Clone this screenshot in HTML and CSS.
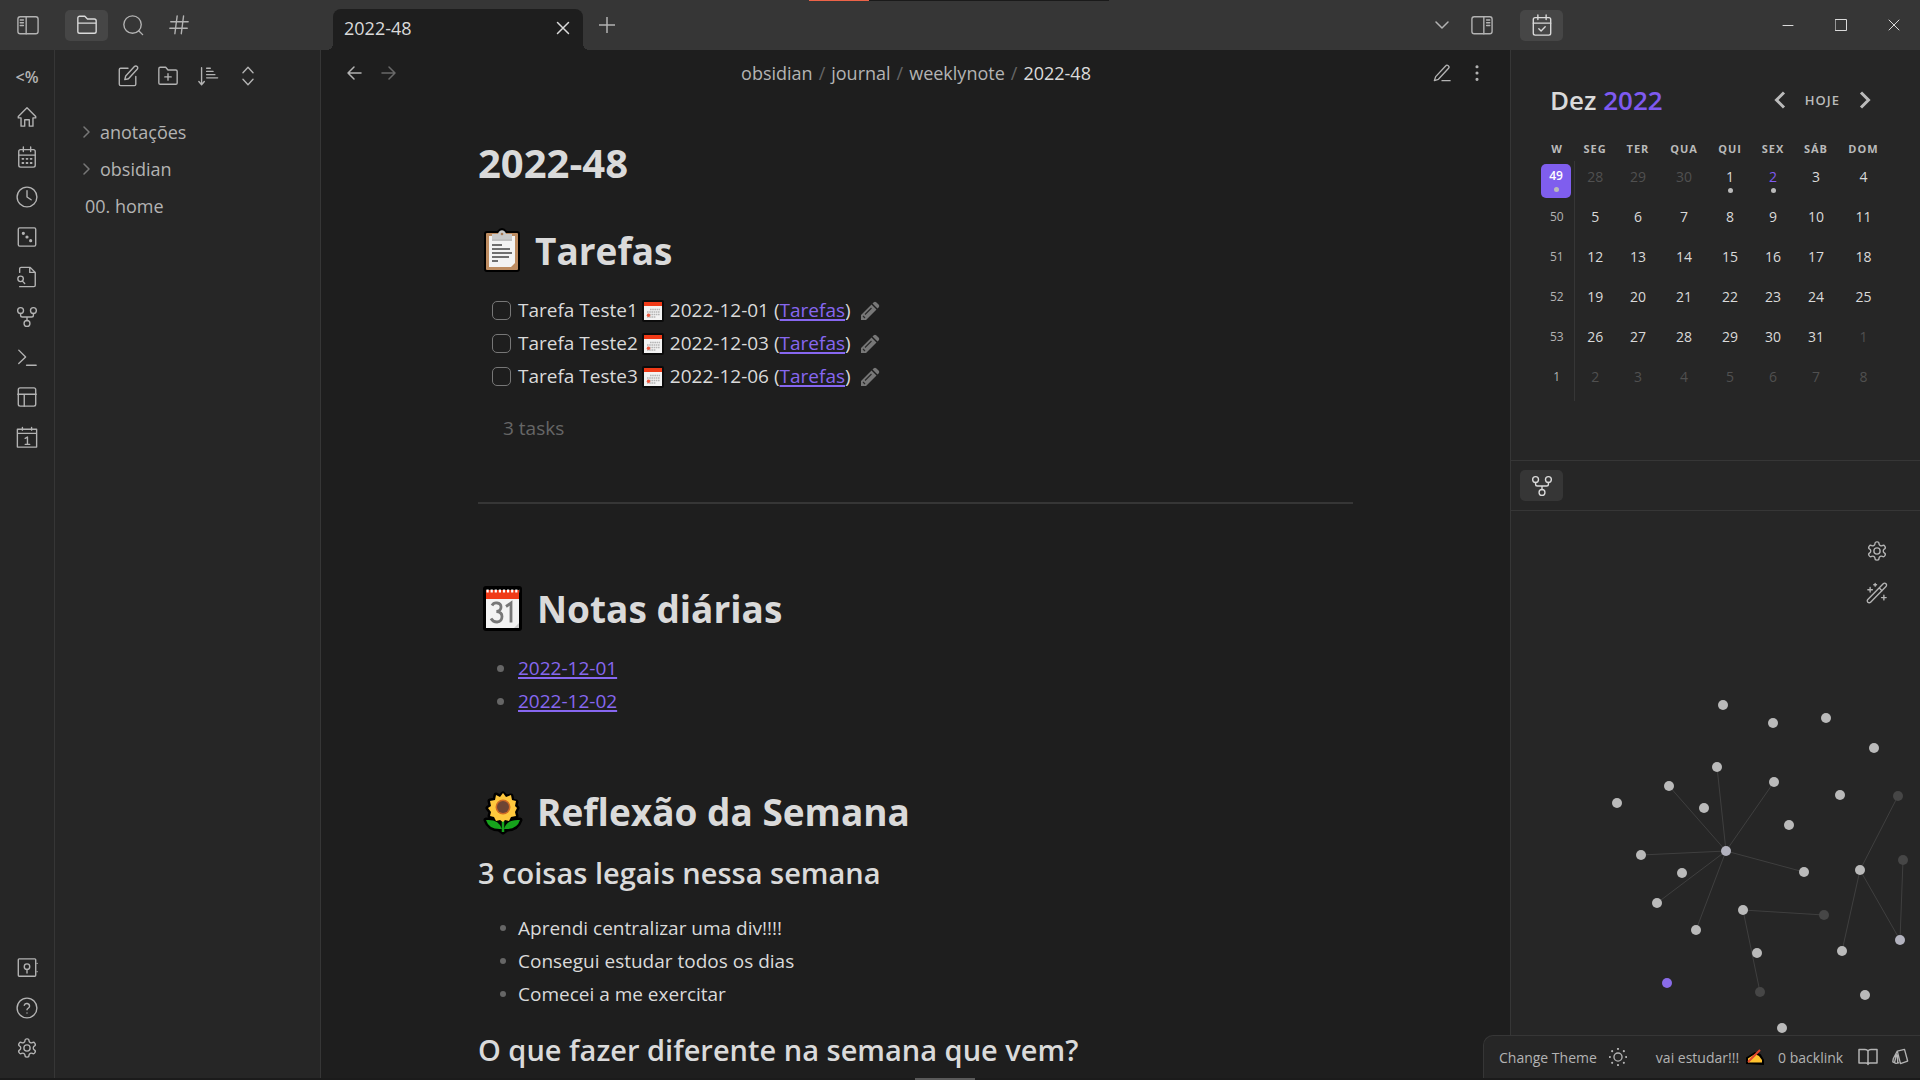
FILE: index.html
```html
<!DOCTYPE html>
<html lang="pt-BR">
<head>
<meta charset="utf-8">
<title>2022-48 - obsidian</title>
<link rel="stylesheet" href="styles.css">
</head>
<body>
<svg class="sprite" aria-hidden="true">
  <symbol id="i-fork" viewBox="0 0 24 24"><circle cx="12" cy="19" r="3.2"/><circle cx="5" cy="5" r="3.2"/><circle cx="19" cy="5" r="3.2"/><path d="M19 8v2c0 1-1 2-2 2H7c-1 0-2-1-2-2V8M12 12v4"/></symbol>
  <symbol id="i-gear" viewBox="0 0 24 24"><path d="M12.22 2h-.44a2 2 0 0 0-2 2v.18a2 2 0 0 1-1 1.73l-.43.25a2 2 0 0 1-2 0l-.15-.08a2 2 0 0 0-2.73.73l-.22.38a2 2 0 0 0 .73 2.73l.15.1a2 2 0 0 1 1 1.72v.51a2 2 0 0 1-1 1.74l-.15.09a2 2 0 0 0-.73 2.73l.22.38a2 2 0 0 0 2.73.73l.15-.08a2 2 0 0 1 2 0l.43.25a2 2 0 0 1 1 1.73V20a2 2 0 0 0 2 2h.44a2 2 0 0 0 2-2v-.18a2 2 0 0 1 1-1.73l.43-.25a2 2 0 0 1 2 0l.15.08a2 2 0 0 0 2.73-.73l.22-.39a2 2 0 0 0-.73-2.73l-.15-.08a2 2 0 0 1-1-1.74v-.5a2 2 0 0 1 1-1.74l.15-.09a2 2 0 0 0 .73-2.73l-.22-.38a2 2 0 0 0-2.73-.73l-.15.08a2 2 0 0 1-2 0l-.43-.25a2 2 0 0 1-1-1.73V4a2 2 0 0 0-2-2z"/><circle cx="12" cy="12" r="3.4"/></symbol>
  <symbol id="i-due" viewBox="0 0 22 22"><rect width="22" height="22" rx="2" fill="#0b0b0b" stroke="none"/><path d="M2 2h18v18H2z" fill="#f2f2f2" stroke="none"/><path d="M2 2h18v4H2z" fill="#f03a17" stroke="none"/><path d="M8 9.500h10M5 12h13M5 14.500h13M5 17h9" stroke="#b5b5b5" stroke-width="1.600" stroke-dasharray="1.600 .6" stroke-linecap="butt"/><circle cx="6.500" cy="15.300" r="1.700" fill="#f0553a" stroke="none"/></symbol>
  <symbol id="i-pencil" viewBox="0 0 20 20"><path d="M1 19v-5L11.500 3.500l5 5L6 19zM12.500 2.500l1.300-1.300q1.200-1 2.400 0L18.800 3.800q1 1.200 0 2.400L17.500 7.500z" fill="#777" stroke="none"/><path d="M5 13.500l6.500-6.500M3 15l2 2" stroke="#2a2a2a" stroke-width="1.200"/></symbol>
</svg>
<div class="app">
  <header class="titlebar">
    <div class="title-left">
      <button class="icon-btn toggle" aria-label="Recolher"><svg class="icon wide" viewBox="0 0 24 24"><rect x="1" y="3" width="22" height="18.500" rx="2.500"/><path d="M10 3v18.500M3.500 6.500h3.500M3.500 9.500h3.500M3.500 12.500h3.500"/></svg></button>
      <button class="icon-btn active" aria-label="Arquivos"><svg class="icon folder" viewBox="0 0 24 24"><path d="M20 21a2 2 0 0 0 2-2V7.500a2 2 0 0 0-2-2h-7.500L9.600 2.500H4a2 2 0 0 0-2 2V19a2 2 0 0 0 2 2zM2 10h20"/></svg></button>
      <button class="icon-btn" aria-label="Pesquisar"><svg class="icon" viewBox="0 0 24 24"><circle cx="11.500" cy="11.500" r="9.500"/><path d="m22.500 22.500-4.300-4.300"/></svg></button>
      <button class="icon-btn" aria-label="Tags"><svg class="icon" viewBox="0 0 24 24"><path d="M3 8.500h19M2 15.500h19M10 2 7.500 21.500M17 2 14.500 21.500"/></svg></button>
    </div>
    <div class="title-main">
      <div class="tab"><span>2022-48</span><button class="bare" aria-label="Fechar aba"><svg class="icon tiny" viewBox="0 0 14 14"><path d="m1.500 1.500 11 11M12.500 1.500l-11 11"/></svg></button></div>
      <button class="bare newtab" aria-label="Nova aba"><svg class="icon small" viewBox="0 0 16 16"><path d="M8 0v16M0 8h16"/></svg></button>
      <div class="title-tools">
        <button class="bare" aria-label="Lista de abas"><svg class="icon small" viewBox="0 0 16 16"><path d="m2 5 6 6 6-6"/></svg></button>
        <button class="bare" aria-label="Barra direita"><svg class="icon wide" viewBox="0 0 24 24"><rect x="1" y="3" width="22" height="18.500" rx="2.500"/><path d="M14 3v18.500M17 6.500h3.500M17 9.500h3.500M17 12.500h3.500"/></svg></button>
      </div>
    </div>
    <div class="title-right">
      <button class="icon-btn active" aria-label="Calendário"><svg class="icon" viewBox="0 0 24 24"><rect x="2.500" y="4" width="19" height="19" rx="2"/><path d="M7.500 1v5M16.500 1v5M2.500 10h19M8.500 16l2.500 2.500 4.500-4.500"/></svg></button>
      <div class="win">
        <button class="bare" aria-label="Minimizar"><svg class="icon mini" viewBox="0 0 12 12"><path d="M1 6.500h10"/></svg></button>
        <button class="bare" aria-label="Maximizar"><svg class="icon mini" viewBox="0 0 12 12"><path d="M.5.5h11v11H.5z"/></svg></button>
        <button class="bare" aria-label="Fechar"><svg class="icon mini" viewBox="0 0 12 12"><path d="m1 1 10 10M11 1 1 11"/></svg></button>
      </div>
    </div>
    <div class="load"><span class="load-done"></span></div>
  </header>

  <div class="body">
    <nav class="ribbon">
      <button class="rib" aria-label="Templater"><span class="rib-text">&lt;%</span></button>
      <button class="rib" aria-label="Início"><svg class="icon" viewBox="0 0 24 24"><path d="M12 2 2.500 11.500V13H5.500v9h4v-7h5v7h4v-9h3v-1.500z"/></svg></button>
      <button class="rib" aria-label="Calendário"><svg class="icon" viewBox="0 0 24 24"><rect x="3" y="4" width="18" height="19" rx="2"/><path d="M8 1v5M16 1v5M3 10h18"/><path d="M7 14h1M11.500 14h1M16 14h1M7 18.500h1M11.500 18.500h1M16 18.500h1" stroke-width="2"/></svg></button>
      <button class="rib" aria-label="Recentes"><svg class="icon" viewBox="0 0 24 24"><circle cx="12" cy="12" r="10.800"/><path d="M12 5v7l4.500 3"/></svg></button>
      <button class="rib" aria-label="Nota aleatória"><svg class="icon" viewBox="0 0 24 24"><rect x="2.500" y="2" width="19" height="20" rx="1.500"/><g fill="currentColor"><circle cx="8" cy="8" r="1"/><circle cx="12" cy="12" r="1"/><circle cx="16" cy="16" r="1"/></g></svg></button>
      <button class="rib" aria-label="Trocador rápido"><svg class="icon" viewBox="0 0 24 24"><path d="M4 7V3a1.500 1.500 0 0 1 1.500-1.500h10L21 7v14a1.500 1.500 0 0 1-1.500 1.500H4M15 1.500V7h6"/><circle cx="5" cy="14" r="3"/><path d="m7 16.500 2.500 2.500"/></svg></button>
      <button class="rib" aria-label="Grafo"><svg class="icon"><use href="#i-fork"/></svg></button>
      <button class="rib" aria-label="Comandos"><svg class="icon" viewBox="0 0 24 24"><path d="m3 4.500 7.500 7.500L3 19M11.500 21H22"/></svg></button>
      <button class="rib" aria-label="Layouts"><svg class="icon" viewBox="0 0 24 24"><rect x="2.500" y="2" width="19" height="20" rx="2"/><path d="M2 9h20M9 9v13"/></svg></button>
      <button class="rib" aria-label="Nota diária"><svg class="icon" viewBox="0 0 24 24"><path d="M1.500 3.500h21V23h-21zM1.500 8h21M7 1.500v3M17 1.500v3"/><path d="M10 13.500l2.500-1.500v8M10 20h5" stroke-width="1.500"/></svg></button>
      <div class="grow"></div>
      <button class="rib" aria-label="Cofre"><svg class="icon" viewBox="0 0 24 24"><rect x="2.500" y="2" width="19" height="19" rx="1"/><circle cx="12" cy="10.500" r="3"/><path d="M12 13.500v4M23 7v0M23 16v0"/></svg></button>
      <button class="rib" aria-label="Ajuda"><svg class="icon" viewBox="0 0 24 24"><circle cx="12" cy="12" r="10.800"/><path d="M9 9a3 3 0 0 1 5.800 1c0 2-2.800 2.500-2.800 4M12 17.500v0"/></svg></button>
      <button class="rib" aria-label="Configurações"><svg class="icon"><use href="#i-gear"/></svg></button>
    </nav>

    <aside class="files">
      <div class="file-tools">
        <button class="bare" aria-label="Nova nota"><svg class="icon" viewBox="0 0 24 24"><path d="M12 3.500H4a1.500 1.500 0 0 0-1.500 1.500v16A1.500 1.500 0 0 0 4 22.500h15a1.500 1.500 0 0 0 1.500-1.500v-8.500"/><path d="M19 1.700a2.100 2.100 0 0 1 3 3L12.500 15l-4 1 1-4z"/></svg></button>
        <button class="bare" aria-label="Nova pasta"><svg class="icon" viewBox="0 0 24 24"><path d="M20.500 21a1.500 1.500 0 0 0 1.500-1.500V7a1.500 1.500 0 0 0-1.500-1.500H12L9.500 2.500H3.500A1.500 1.500 0 0 0 2 4v15.500A1.500 1.500 0 0 0 3.500 21zM12 9.500v7M8.500 13h7"/></svg></button>
        <button class="bare" aria-label="Ordenar"><svg class="icon" viewBox="0 0 24 24"><path d="M5 3v18M2 18l3 3.500L8 18M10.500 3.500h4M10.500 7h7M10.500 10.500h9M10.500 14h12"/></svg></button>
        <button class="bare" aria-label="Expandir"><svg class="icon" viewBox="0 0 24 24"><path d="m6.500 8.500 5.500-6 5.500 6M6.500 15.500l5.500 6 5.500-6"/></svg></button>
      </div>
      <div class="tree">
        <a class="node parent" href="#"><svg class="icon chev" viewBox="0 0 12 12"><path d="m3 1 5 5-5 5"/></svg>anotações</a>
        <a class="node parent" href="#"><svg class="icon chev" viewBox="0 0 12 12"><path d="m3 1 5 5-5 5"/></svg>obsidian</a>
        <a class="node" href="#">00. home</a>
      </div>
    </aside>

    <main class="main">
      <div class="view-head">
        <div class="nav">
          <button class="bare" aria-label="Voltar"><svg class="icon small" viewBox="0 0 16 16"><path d="M15 8H2M8 2 2 8l6 6"/></svg></button>
          <button class="bare dim" aria-label="Avançar"><svg class="icon small" viewBox="0 0 16 16"><path d="M1 8h13M8 2l6 6-6 6"/></svg></button>
        </div>
        <div class="crumbs"><a href="#">obsidian</a><i>/</i><a href="#">journal</a><i>/</i><a href="#">weeklynote</a><i>/</i><b>2022-48</b></div>
        <div class="view-tools">
          <button class="bare" aria-label="Editar"><svg class="icon mid" viewBox="0 0 20 20"><path d="M10 18.500h9M14 2.200a2 2 0 0 1 3.300 2.600L6 17l-4.500 1.500L3 14z"/></svg></button>
          <button class="bare" aria-label="Mais opções"><svg class="icon mid" viewBox="0 0 20 20"><g fill="currentColor"><circle cx="10" cy="3" r="1"/><circle cx="10" cy="10" r="1"/><circle cx="10" cy="17" r="1"/></g></svg></button>
        </div>
      </div>
      <article class="note">
        <h1 class="title">2022-48</h1>
        <h1 class="h-tasks"><svg class="emoji" viewBox="0 0 40 46"><path d="M4 3h10q5-6 10 0h10q3 0 3 3v35q0 3-3 3H4q-3 0-3-3V6q0-3 3-3z" fill="#000"/><rect x="3" y="5" width="32" height="37" rx="1" fill="#bd8c61"/><path d="M6 8h26v27l-4 4H6z" fill="#f3f3f3"/><path d="M9 6h6c1-5 7-5 8 0h6v5H9z" fill="#c9c9c9"/><circle cx="19" cy="6" r="1.300" fill="#a77a55"/><path d="M9 12h20" stroke="#8b8b8b"/><path d="M9 17h10M9 21h18M9 25h20M9 29h17M9 33h6" stroke="#444" stroke-width="1.500"/></svg>Tarefas</h1>
        <ul class="tasks">
          <li><input type="checkbox" id="t1"><label for="t1">Tarefa Teste1</label><svg class="due"><use href="#i-due"/></svg><span>2022-12-01 (<a href="#">Tarefas</a>)</span><button class="bare edit" aria-label="Editar tarefa"><svg class="pen"><use href="#i-pencil"/></svg></button></li>
          <li><input type="checkbox" id="t2"><label for="t2">Tarefa Teste2</label><svg class="due"><use href="#i-due"/></svg><span>2022-12-03 (<a href="#">Tarefas</a>)</span><button class="bare edit" aria-label="Editar tarefa"><svg class="pen"><use href="#i-pencil"/></svg></button></li>
          <li><input type="checkbox" id="t3"><label for="t3">Tarefa Teste3</label><svg class="due"><use href="#i-due"/></svg><span>2022-12-06 (<a href="#">Tarefas</a>)</span><button class="bare edit" aria-label="Editar tarefa"><svg class="pen"><use href="#i-pencil"/></svg></button></li>
        </ul>
        <p class="count">3 tasks</p>
        <hr>
        <h1 class="h-daily"><svg class="emoji" viewBox="0 0 40 46"><rect y="0" width="39" height="45" rx="3" fill="#000"/><path d="M3 4h33v38H3z" fill="#f3f3f3"/><path d="M3 4h33v9H3z" fill="#f03a17"/><path d="M3.500 5h33" stroke="#fff" stroke-width="3" stroke-dasharray="2.200 1.900"/><path d="M9 19.500q1.500-3 5-2.500 4 .5 4 4 0 4-4.500 4.500 5.500.5 5.500 5 0 5-5 5.500-4 0-6-3.500M23 20.500l5-3.500v19.500" fill="none" stroke="#777" stroke-width="2.800"/><path d="m31 42 5-5v5z" fill="#ccc"/></svg>Notas diárias</h1>
        <ul class="list">
          <li><a href="#">2022-12-01</a></li>
          <li><a href="#">2022-12-02</a></li>
        </ul>
        <h1 class="h-week"><svg class="emoji" viewBox="0 0 40 46"><g stroke="#000" stroke-width="5" stroke-linejoin="round" fill="#000"><path d="M3 31q12-1 17 7 5-8 17-7-3 9-13 9l-4 3-4-3Q6 40 3 31z"/><path d="m20 5 3 3 5-1 1 5 4 1-1 4 2 2-2 4 1 4-5 1-2 4-4-1-2 2-3-2-4 1-2-4-4-1 1-4-3-4 3-2-1-5 5-1 1-5 4 2z"/></g><path d="M20 30v13" stroke="#16a31c" stroke-width="2.500"/><path d="M3 31q13-1 16 9Q6 41 3 31zM37 31q-13-1-16 9 13 1 16-9z" fill="#16a31c"/><path d="m20 4 3 4 5-2 1 5 4 1-1 5 2 2-2 4 1 4-5 1-2 4-4-1-2 2-3-2-4 1-2-4-4-1 1-4-3-4 3-2-1-5 5-1 1-5 4 2z" fill="#ffc83d"/><circle cx="20" cy="18" r="7.500" fill="#cf6b25"/><circle cx="20" cy="18" r="6" fill="#6d4534"/></svg>Reflexão da Semana</h1>
        <h2 class="h2-first">3 coisas legais nessa semana</h2>
        <ul class="list small-dots">
          <li>Aprendi centralizar uma div!!!!</li>
          <li>Consegui estudar todos os dias</li>
          <li>Comecei a me exercitar</li>
        </ul>
        <h2 class="h2-next">O que fazer diferente na semana que vem?</h2>
      </article>
    </main>

    <aside class="side">
      <section class="cal">
        <div class="cal-head">
          <h3>Dez <em>2022</em></h3>
          <div class="cal-nav">
            <button class="bare" aria-label="Mês anterior"><svg class="arrow" viewBox="0 0 12 18"><path d="M10 1.500 2.500 9l7.500 7.500"/></svg></button>
            <button class="bare today">HOJE</button>
            <button class="bare" aria-label="Próximo mês"><svg class="arrow" viewBox="0 0 12 18"><path d="M2 1.500 9.500 9 2 16.500"/></svg></button>
          </div>
        </div>
        <table>
          <colgroup><col class="c34"><col class="c42"><col class="c44"><col class="c48"><col class="c44"><col class="c42"><col class="c44"><col class="c51"></colgroup>
          <thead><tr><th>W</th><th>SEG</th><th>TER</th><th>QUA</th><th>QUI</th><th>SEX</th><th>SÁB</th><th>DOM</th></tr></thead>
          <tbody>
            <tr><td class="wk"><span class="now">49<s></s></span></td><td class="off">28</td><td class="off">29</td><td class="off">30</td><td>1<s></s></td><td class="cur">2<s></s></td><td>3</td><td>4</td></tr>
            <tr><td class="wk">50</td><td>5</td><td>6</td><td>7</td><td>8</td><td>9</td><td>10</td><td>11</td></tr>
            <tr><td class="wk">51</td><td>12</td><td>13</td><td>14</td><td>15</td><td>16</td><td>17</td><td>18</td></tr>
            <tr><td class="wk">52</td><td>19</td><td>20</td><td>21</td><td>22</td><td>23</td><td>24</td><td>25</td></tr>
            <tr><td class="wk">53</td><td>26</td><td>27</td><td>28</td><td>29</td><td>30</td><td>31</td><td class="off">1</td></tr>
            <tr><td class="wk">1</td><td class="off">2</td><td class="off">3</td><td class="off">4</td><td class="off">5</td><td class="off">6</td><td class="off">7</td><td class="off">8</td></tr>
          </tbody>
        </table>
      </section>
      <div class="graph-tabs"><button class="icon-btn active" aria-label="Grafo"><svg class="icon"><use href="#i-fork"/></svg></button></div>
      <section class="graph">
        <svg class="graph-map" viewBox="0 0 409 568" preserveAspectRatio="xMinYMin slice">
          <path class="edges" d="M215 340 158 275M215 340 206 256M215 340 263 271M215 340 130 344M215 340 146 392M215 340 185 419M215 340 293 361M232 399 313 404M232 399 249 481M349 359 387 285M349 359 331 440M349 359 389 429M389 429 392 349"/>
          <g fill="#bababa"><circle cx="212" cy="194" r="5"/><circle cx="262" cy="212" r="5"/><circle cx="315" cy="207" r="5"/><circle cx="363" cy="237" r="5"/><circle cx="206" cy="256" r="5"/><circle cx="158" cy="275" r="5"/><circle cx="263" cy="271" r="5"/><circle cx="329" cy="284" r="5"/><circle cx="106" cy="292" r="5"/><circle cx="193" cy="297" r="5"/><circle cx="278" cy="314" r="5"/><circle cx="130" cy="344" r="5"/><circle cx="171" cy="362" r="5"/><circle cx="293" cy="361" r="5"/><circle cx="349" cy="359" r="5"/><circle cx="146" cy="392" r="5"/><circle cx="232" cy="399" r="5"/><circle cx="185" cy="419" r="5"/><circle cx="246" cy="442" r="5"/><circle cx="331" cy="440" r="5"/><circle cx="354" cy="484" r="5"/><circle cx="271" cy="517" r="5"/></g>
          <g fill="#b3b3bf"><circle cx="215" cy="340" r="5"/><circle cx="389" cy="429" r="5"/></g>
          <g fill="#464646"><circle cx="387" cy="285" r="5"/><circle cx="392" cy="349" r="5"/><circle cx="313" cy="404" r="5"/><circle cx="249" cy="481" r="5"/></g>
          <circle cx="156" cy="472" r="5" fill="#8a6ce8"/>
        </svg>
        <div class="graph-tools">
          <button class="bare" aria-label="Opções do grafo"><svg class="icon"><use href="#i-gear"/></svg></button>
          <button class="bare" aria-label="Animar"><svg class="icon" viewBox="0 0 24 24"><path d="M18.800 1.900a2.100 2.100 0 0 1 3 3L5 22a2.100 2.100 0 0 1-3-3zM14.500 6.500l3 3M4.500 6v5M2 8.500h5M10 1.500v3M8.500 3h3M19.500 14.500v5M17 17h5"/></svg></button>
        </div>
      </section>
    </aside>
  </div>

  <footer class="status">
    <span>Change Theme</span>
    <svg class="icon sun" viewBox="0 0 20 20"><circle cx="10" cy="10" r="4.500"/><path d="M10 1v0M10 19v0M1 10v0M19 10v0M3.500 3.500v0M16.500 16.500v0M3.500 16.500v0M16.500 3.500v0" stroke-width="2.400"/></svg>
    <span>vai estudar!!!</span>
    <svg class="write" viewBox="0 0 18 16"><path d="M1 14V9l8-5 5 2 3 5v4z" fill="#000" stroke="#000" stroke-width="2"/><path d="M2 13.500V9.500L9 5l4 2 3 4v2.500z" fill="#ffc22e"/><path d="M2 13 14 1" stroke="#e0452c" stroke-width="2"/></svg>
    <span>0 backlink</span>
    <svg class="icon book" viewBox="0 0 20 20"><path d="M10 4v13.500M10 4Q9 2.500 7 2.500H1v13.500h7q2 0 2 1.500 0-1.500 2-1.500h7V2.500h-6Q11 2.500 10 4z"/></svg>
    <svg class="icon cards" viewBox="0 0 20 20"><path d="m7 3.500 8-2 3.500 13-8 2.800zM7 3.500 2.500 12l-.5 3.500 3.500 1.500 3-.5M6 7.500l-2 8.500M7 8l.5 8"/></svg>
  </footer>
  <div class="edge"><span class="edge-mark"></span></div>
</div>
</body>
</html>
```
FILE: styles.css
```css
* { box-sizing: border-box; }
html, body { height: 100%; }
body {
  margin: 0;
  background: #1e1e1e;
  color: #dadada;
  font-family: "Open Sans", "Noto Sans", sans-serif;
  font-size: 19px;
  overflow: hidden;
}
button { font: inherit; color: inherit; background: none; border: 0; padding: 0; display: flex; align-items: center; justify-content: center; }
ul, h1, h2, h3, p { margin: 0; padding: 0; }
ul { list-style: none; }
a { color: inherit; text-decoration: none; }
.sprite { position: absolute; width: 0; height: 0; }
.app { height: 100vh; display: flex; flex-direction: column; position: relative; }
.icon { width: 22px; height: 22px; fill: none; stroke: currentColor; stroke-width: 1.5; stroke-linecap: round; stroke-linejoin: round; display: block; flex: none; }
.wide { width: 24px; height: 22px; }
.mid { width: 18px; height: 18px; }
.small { width: 16px; height: 16px; }
.tiny { width: 14px; height: 14px; }
.mini { width: 12px; height: 12px; stroke-width: 1; }
.grow { flex: 1; }

/* title bar */
.titlebar { flex: none; height: 50px; background: #363636; display: flex; color: #b3b3b3; position: relative; }
.title-left { width: 321px; display: flex; align-items: center; gap: 3px; }
.icon-btn { width: 43px; height: 31px; border-radius: 5px; }
.icon-btn.active { background: #464646; color: #dadada; }
.toggle { width: 55px; margin-right: 7px; }
.title-main { flex: 1; display: flex; align-items: flex-end; padding: 0 16px 0 12px; }
.tab {
  width: 250px; height: 41px; padding: 0 13px 4px 11px; background: #1e1e1e; border-radius: 8px 8px 0 0;
  display: flex; align-items: center; justify-content: space-between; color: #dadada; font-size: 18px; position: relative;
}
.tab::before, .tab::after { content: ""; position: absolute; bottom: 0; width: 6px; height: 6px; }
.tab::before { left: -6px; background: radial-gradient(circle at 0 0, #363636 6px, #1e1e1e 6px); }
.tab::after { right: -6px; background: radial-gradient(circle at 100% 0, #363636 6px, #1e1e1e 6px); }
.newtab { height: 50px; margin-left: 16px; }
.title-tools { margin-left: auto; height: 50px; display: flex; align-items: center; gap: 20px; }
.title-right { width: 410px; padding-left: 10px; display: flex; align-items: center; justify-content: space-between; }
.win { display: flex; gap: 41px; padding-right: 20px; color: #dadada; }
.load { position: absolute; top: 0; left: 809px; width: 300px; height: 1px; background: #1a1a1a; }
.load-done { display: block; width: 60px; height: 1px; background: #ee6348; }

.body { flex: 1; min-height: 0; display: flex; }

/* ribbon */
.ribbon { width: 55px; background: #262626; border-right: 1px solid #363636; display: flex; flex-direction: column; padding: 7px 0 10px; color: #b3b3b3; }
.rib { height: 40px; }
.rib-text { font-size: 16px; font-weight: 600; line-height: 40px; }

/* file list */
.files { width: 266px; background: #262626; border-right: 1px solid #363636; color: #b3b3b3; }
.file-tools { height: 52px; display: flex; align-items: center; justify-content: center; gap: 18px; }
.tree { padding: 11px 0; }
.node { display: flex; align-items: center; height: 37px; padding-left: 30px; font-size: 18px; }
.parent { padding-left: 26px; gap: 7px; }
.chev { width: 12px; height: 12px; color: #777; }

/* note */
.main { flex: 1; min-width: 0; display: flex; flex-direction: column; }
.view-head { height: 46px; flex: none; display: flex; align-items: center; justify-content: space-between; padding: 0 24px 0 25px; font-size: 18px; color: #b3b3b3; }
.nav { display: flex; gap: 19px; width: 60px; }
.dim { opacity: .5; }
.crumbs i { font-style: normal; color: #666; margin: 0 6px; }
.crumbs b { font-weight: 400; color: #dadada; }
.view-tools { display: flex; gap: 17px; width: 60px; justify-content: flex-end; }
.note { width: 875px; max-width: 100%; margin: 0 auto; padding-top: 43px; flex: 1; min-height: 0; overflow: hidden; line-height: 33px; }
.note h1 { font-size: 37px; line-height: 48px; font-weight: 700; display: flex; align-items: center; }
.note .title { font-size: 40px; }
.note h2 { font-size: 29px; line-height: 40px; font-weight: 600; }
.emoji { width: 40px; height: 46px; margin: 0 14px 0 5px; flex: none; }
.h-tasks .emoji { margin-right: 12px; }
.note .h-tasks { margin-top: 40px; }
.note .h-daily { margin-top: 81px; }
.note .h-week { margin-top: 70px; }
.note .h2-first { margin-top: 17px; }
.note .h2-next { margin-top: 19px; }
.note ul { margin-top: 19px; }
.note a { color: #8767f0; text-decoration: underline; text-decoration-thickness: 2px; text-underline-offset: 2px; }
.tasks li { display: flex; align-items: center; height: 33px; padding-left: 14px; }
.tasks input { appearance: none; width: 19px; height: 19px; margin: 0 7px 0 0; border: 1px solid #777; border-radius: 5px; }
.due { width: 22px; height: 22px; margin: 0 6px 0 4px; }
.edit { margin-left: 9px; }
.pen { width: 20px; height: 20px; }
.count { margin-top: 19px; padding-left: 25px; color: #666; }
.note hr { border: 0; height: 2px; background: #363636; margin: 57px 0 0; }
.list li { padding-left: 40px; position: relative; }
.list li::before { content: ""; position: absolute; left: 19px; top: 13px; width: 7px; height: 7px; border-radius: 50%; background: #666; }
.small-dots li::before { left: 22px; width: 6px; height: 6px; }

/* right sidebar */
.side { width: 410px; background: #262626; border-left: 1px solid #363636; display: flex; flex-direction: column; }
.cal { height: 410px; padding: 27px 29px 0; }
.cal-head { display: flex; align-items: center; justify-content: space-between; height: 46px; padding: 0 20px 0 10px; }
.cal h3 { font-size: 26px; font-weight: 600; line-height: 46px; }
.cal em { font-style: normal; color: #7f5af0; font-weight: 600; }
.cal-nav { display: flex; gap: 19px; }
.arrow { width: 12px; height: 18px; fill: none; stroke: #bababa; stroke-width: 3; }
.today { font-size: 13px; letter-spacing: 1px; color: #bababa; font-weight: 600; }
.cal table { border-collapse: collapse; table-layout: fixed; width: 349px; }
.c34 { width: 34px; } .c42 { width: 42px; } .c44 { width: 44px; } .c48 { width: 48px; } .c51 { width: 51px; }
.cal th { padding: 15px 0 0; height: 38px; font-size: 11px; line-height: 22px; letter-spacing: 1px; color: #bababa; vertical-align: top; }
.cal td { height: 40px; padding: 5px 0 0; vertical-align: top; text-align: center; font-size: 14px; line-height: 22px; position: relative; }
.cal td.wk { border-right: 1px solid #363636; font-size: 12px; color: #b3b3b3; }
.cal td.off { color: #505050; }
.cal td.cur { color: #7f5af0; }
.now { display: block; width: 30px; height: 34px; margin: -2px auto 0 1px; line-height: 24px; border-radius: 5px; background: #7f5eee; color: #fff; font-weight: 600; position: relative; }
.cal s { position: absolute; left: 50%; margin-left: -2px; bottom: 8px; width: 5px; height: 5px; border-radius: 50%; background: #bababa; }
.cal .now s { bottom: 6px; }
.graph-tabs { height: 51px; border-top: 1px solid #363636; border-bottom: 1px solid #363636; display: flex; align-items: center; padding-left: 9px; }
.graph-tabs .active { background: #363636; }
.graph { flex: 1; min-height: 0; position: relative; overflow: hidden; }
.graph-map { width: 100%; height: 100%; display: block; }
.edges { stroke: #3f3f3f; stroke-width: 1; fill: none; }
.graph-tools { position: absolute; top: 29px; right: 32px; display: grid; gap: 20px; color: #b3b3b3; }

/* status bar */
.status {
  position: absolute; right: 0; bottom: 2px; height: 43px; width: 437px; padding: 0 11px 0 15px;
  background: #262626; border: solid #363636; border-width: 1px 0 0 1px; border-radius: 10px 0 0 0;
  display: flex; align-items: center; color: #b3b3b3; font-size: 14px; white-space: nowrap;
}
.sun, .cards { width: 18px; height: 18px; }
.sun { margin: 0 29px 0 12px; }
.write { width: 18px; height: 16px; margin: 0 14px 0 7px; }
.book { width: 20px; height: 20px; margin: 0 13px 0 auto; }
.edge { flex: none; height: 2px; background: #1b1b1b; display: flex; justify-content: center; }
.edge-mark { width: 60px; background: #5a5a5a; margin-right: 30px; }
```
